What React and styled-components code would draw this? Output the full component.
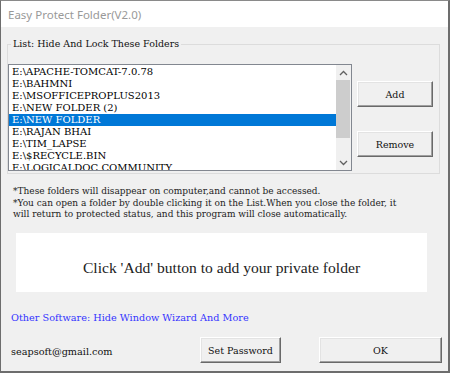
import React from "react";
import styled, { createGlobalStyle } from "styled-components";

const GlobalStyle = createGlobalStyle`
  html, body { margin: 0; padding: 0; background: #f0f0f0; }
  * { box-sizing: border-box; }
`;

const serif = `"DejaVu Serif", "Liberation Serif", serif`;

const Window = styled.div`
  width: 450px;
  height: 373px;
  display: flex;
  flex-direction: column;
  border-top: 1px solid #8a8a8a;
  border-left: 1px solid #6d6d6d;
  border-right: 2px solid #6d6d6d;
  border-bottom: 2px solid #6d6d6d;
  background: #f0f0f0;
  overflow: hidden;
`;

const TitleBar = styled.div`
  height: 26px;
  flex: none;
  background: #fff;
  display: flex;
  align-items: center;
  padding-left: 7px;
  font-family: "Noto Sans", "Liberation Sans", sans-serif;
  font-size: 11.5px;
  color: #999;
`;

const Body = styled.div`
  flex: 1;
  display: flex;
  flex-direction: column;
  padding: 10px 8px 0 6px;
  font-family: ${serif};
  font-size: 10px;
  color: #1a1a1a;
`;

const GroupBox = styled.fieldset`
  margin: 0;
  padding: 13px 6px 2px 0;
  border: 1px solid #dcdcdc;
  min-width: 0;
`;

const Legend = styled.legend`
  margin-left: 3px;
  padding: 0 2px;
  font-family: ${serif};
  font-size: 9.5px;
  line-height: 14px;
  color: #111;
`;

const GroupRow = styled.div`
  display: flex;
  align-items: flex-start;
`;

const ListBox = styled.div`
  width: 344px;
  height: 107px;
  flex: none;
  display: flex;
  background: #fff;
  border: 1px solid #828790;
`;

const Items = styled.div`
  flex: 1;
  padding-top: 1px;
  overflow: hidden;
`;

const Item = styled.div`
  height: 12px;
  line-height: 12px;
  padding-left: 3px;
  white-space: nowrap;
  font-size: 10px;
  color: ${(p) => (p.$selected ? "#fff" : "#000")};
  background: ${(p) => (p.$selected ? "#0078d7" : "transparent")};
`;

const ScrollBar = styled.div`
  width: 15px;
  flex: none;
  background: #f0f0f0;
  display: flex;
  flex-direction: column;
`;

const ArrowBox = styled.div`
  height: 15px;
  flex: none;
  display: flex;
  align-items: center;
  justify-content: center;
`;

const Thumb = styled.div`
  height: 58px;
  margin: 0 1px 0 0;
  background: #cdcdcd;
`;

const Spacer = styled.div`
  flex: 1;
`;

const ButtonColumn = styled.div`
  margin-left: 5px;
  padding-top: 17px;
  display: flex;
  flex-direction: column;
  gap: 24px;
`;

const WinButton = styled.button`
  width: ${(p) => p.$w || 76}px;
  height: 26px;
  padding: 0;
  font-family: ${serif};
  font-size: 9.5px;
  color: #111;
  background: #f0f0f0;
  border: 1px solid;
  border-color: #fff #696969 #696969 #fff;
  box-shadow: inset -1px -1px #a0a0a0, inset 1px 1px #e3e3e3;
`;

const Notes = styled.div`
  margin-top: 12px;
  padding-left: 6px;
  font-size: 9px;
  line-height: 11.7px;
  white-space: nowrap;
  color: #222;
`;

const Panel = styled.div`
  margin: 12px 13px 0 9px;
  height: 59px;
  flex: none;
  background: #fff;
  padding-top: 26px;
  text-align: center;
  font-family: "Liberation Serif", serif;
  font-size: 15.6px;
  line-height: 18px;
  color: #222;
`;

const Link = styled.div`
  margin-top: 19px;
  margin-left: 4px;
  font-size: 9.7px;
  line-height: 14px;
  color: #3333ff;
`;

const BottomRow = styled.div`
  margin-top: 12px;
  margin-right: -2px;
  display: flex;
  align-items: center;
  gap: 38px;
`;

const Email = styled.div`
  flex: 1;
  margin-left: 4px;
  padding-top: 3px;
  font-size: 9.7px;
  color: #111;
`;

const Chevron = ({ up }) => (
  <svg width="9" height="6" viewBox="0 0 9 6">
    <polyline
      points={up ? "1,5 4.5,1.5 8,5" : "1,1 4.5,4.5 8,1"}
      fill="none"
      stroke="#606060"
      strokeWidth="1.3"
    />
  </svg>
);

const folders = [
  "E:\\APACHE-TOMCAT-7.0.78",
  "E:\\BAHMNI",
  "E:\\MSOFFICEPROPLUS2013",
  "E:\\NEW FOLDER (2)",
  "E:\\NEW FOLDER",
  "E:\\RAJAN BHAI",
  "E:\\TIM_LAPSE",
  "E:\\$RECYCLE.BIN",
  "E:\\LOGICALDOC COMMUNITY",
];

export default function App() {
  return (
    <>
      <GlobalStyle />
      <Window>
        <TitleBar>Easy Protect Folder(V2.0)</TitleBar>
        <Body>
          <GroupBox>
            <Legend>List: Hide And Lock These Folders</Legend>
            <GroupRow>
              <ListBox>
                <Items>
                  {folders.map((f, i) => (
                    <Item key={f} $selected={i === 4}>
                      {f}
                    </Item>
                  ))}
                </Items>
                <ScrollBar>
                  <ArrowBox>
                    <Chevron up />
                  </ArrowBox>
                  <Thumb />
                  <Spacer />
                  <ArrowBox>
                    <Chevron />
                  </ArrowBox>
                </ScrollBar>
              </ListBox>
              <ButtonColumn>
                <WinButton>Add</WinButton>
                <WinButton>Remove</WinButton>
              </ButtonColumn>
            </GroupRow>
          </GroupBox>
          <Notes>
            <div>*These folders will disappear on computer,and cannot be accessed.</div>
            <div>
              *You can open a folder by double clicking it on the List.When you close the folder, it
            </div>
            <div>will return to protected status, and this program will close automatically.</div>
          </Notes>
          <Panel>Click 'Add' button to add your private folder</Panel>
          <Link>Other Software: Hide Window Wizard And More</Link>
          <BottomRow>
            <Email>seapsoft@gmail.com</Email>
            <WinButton $w={81}>Set Password</WinButton>
            <WinButton $w={123}>OK</WinButton>
          </BottomRow>
        </Body>
      </Window>
    </>
  );
}
